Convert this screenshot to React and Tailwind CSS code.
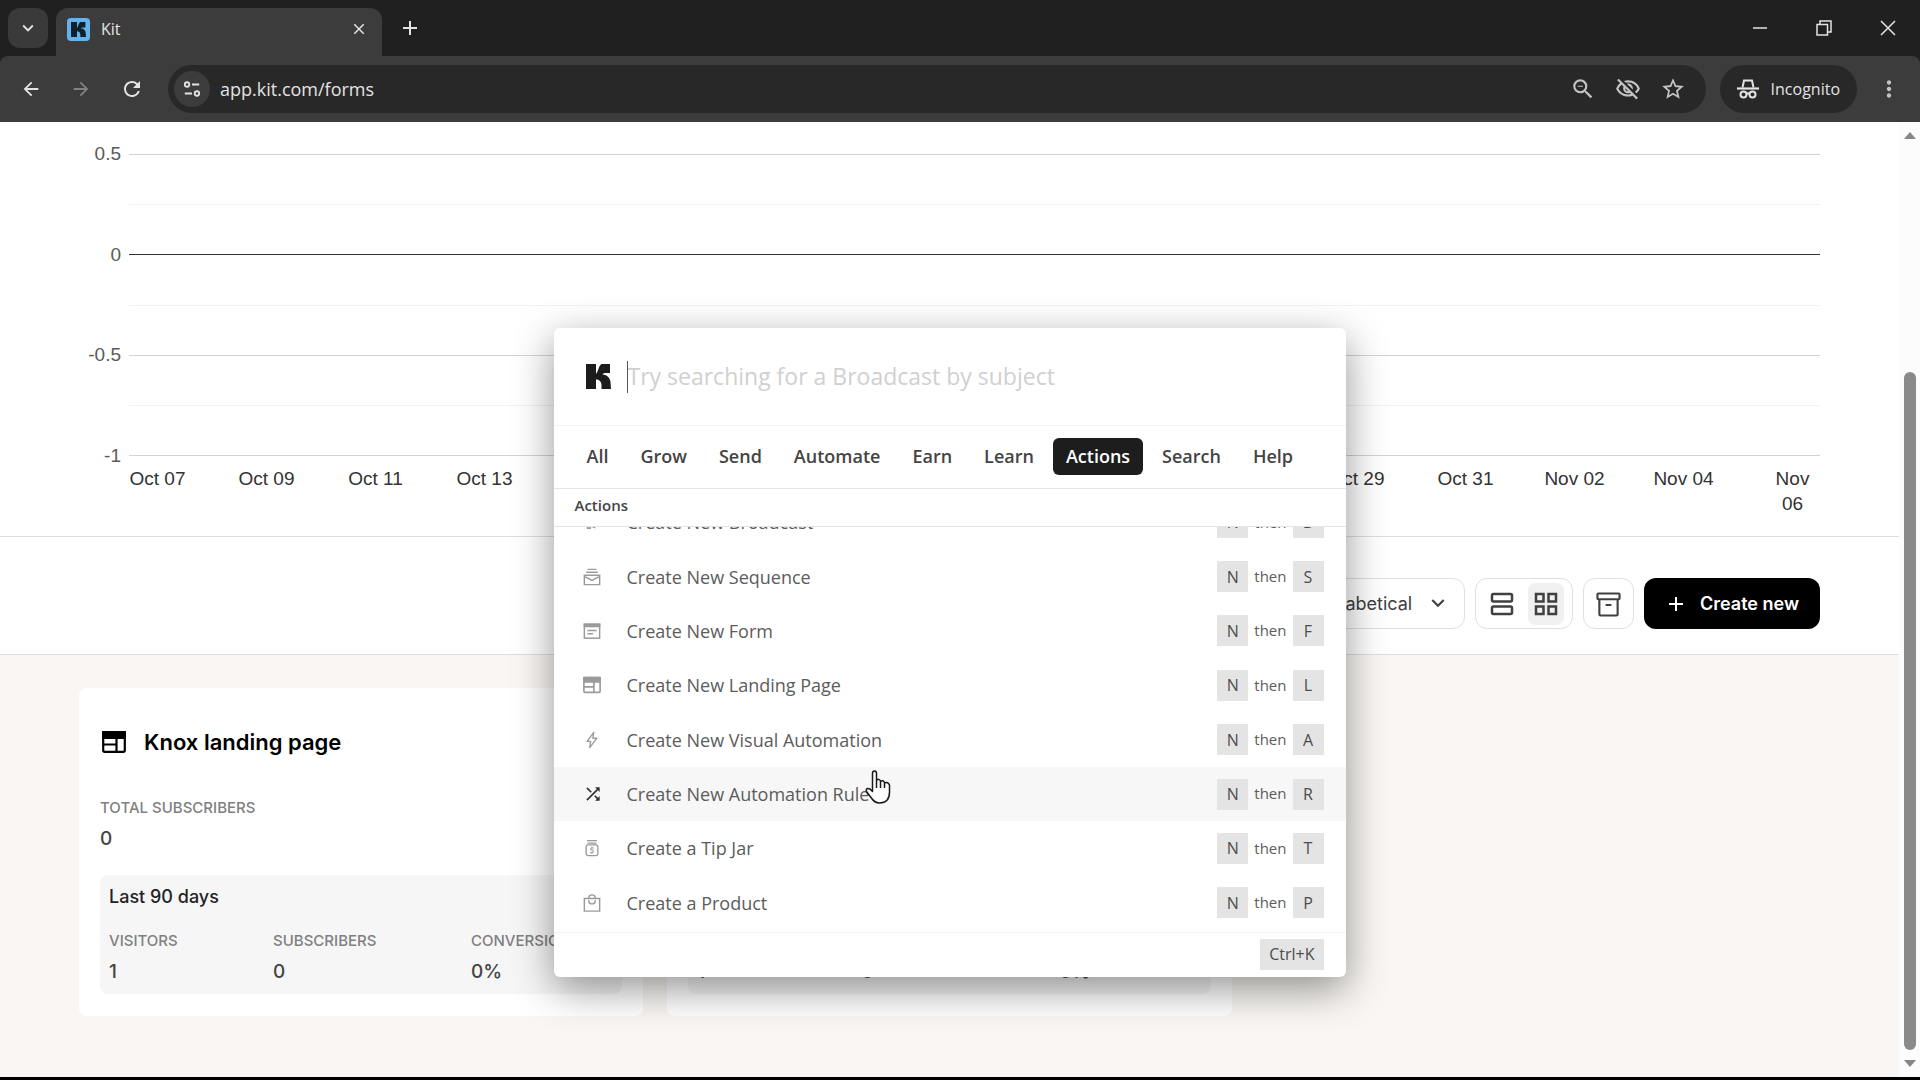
import React from "react";
import {
  MdArrowBack,
  MdArrowForward,
  MdRefresh,
  MdZoomOut,
  MdOutlineVisibilityOff,
  MdStarOutline,
  MdMoreVert,
  MdShuffle,
  MdOutlineViewAgenda,
  MdOutlineGridView,
  MdKeyboardArrowDown,
  MdClose,
  MdAdd,
} from "react-icons/md";

const K_PATH =
  "M0 0H10V10C12 8 13 1 15.500 0H24V9H19.500C18 9 17 9.500 16.500 10.500C21.500 11 24 14 24.500 18L25 25H15.500V21C15.500 17.500 13 15.500 10 15.500V25H0Z";

function KitMark({ className }) {
  return (
    <svg viewBox="0 0 25 25" className={className} fill="currentColor" aria-hidden="true">
      <path d={K_PATH} />
    </svg>
  );
}

function SiteSettingsIcon() {
  return (
    <svg viewBox="0 0 20 20" className="size-[18px]" fill="none" stroke="currentColor" strokeWidth="2" aria-hidden="true">
      <circle cx="4.500" cy="5" r="2.500" />
      <path d="M10 5H18M2 15H10" />
      <circle cx="15.500" cy="15" r="2.500" />
    </svg>
  );
}

function IncognitoIcon() {
  return (
    <svg viewBox="0 0 22 22" className="size-[22px]" fill="none" stroke="currentColor" strokeWidth="2" aria-hidden="true">
      <path d="M0 10.500H22" strokeWidth="2.200" />
      <path d="M5.500 9.500L7 2.500H15L16.500 9.500" />
      <circle cx="6.500" cy="16.500" r="3" />
      <circle cx="15.500" cy="16.500" r="3" />
      <path d="M9.500 16Q11 14.500 12.500 16" />
    </svg>
  );
}

function LandingIcon({ className }) {
  return (
    <svg viewBox="0 0 24 22" className={className} fill="none" stroke="currentColor" strokeWidth="2.200" aria-hidden="true">
      <rect x="1.200" y="1.200" width="21.600" height="19.600" rx="1.500" />
      <path d="M1.200 1.200H22.800V7H1.200Z" fill="currentColor" />
      <path d="M1 13.500H14.500M14.500 7V21" />
    </svg>
  );
}

function BroadcastIcon({ className }) {
  return (
    <svg viewBox="0 0 20 20" className={className} fill="none" stroke="currentColor" strokeWidth="1.700" aria-hidden="true">
      <path d="M2 8V12L13 16V4ZM5 13V17H8V14M15 7Q18 10 15 13" />
    </svg>
  );
}

function SequenceIcon({ className }) {
  return (
    <svg viewBox="0 0 20 20" className={className} fill="none" stroke="currentColor" strokeWidth="1.600" aria-hidden="true">
      <path d="M5 1.500H15M3.500 4.700H16.500" />
      <path d="M1.500 8H18.500V18.500H1.500ZM1.500 9.500L7 12Q10 15 13 12L18.500 9.500" />
    </svg>
  );
}

function FormIcon({ className }) {
  return (
    <svg viewBox="0 0 20 20" className={className} fill="none" stroke="currentColor" strokeWidth="1.600" aria-hidden="true">
      <rect x="1.500" y="2.500" width="17" height="15.500" />
      <path d="M1.500 2.500H18.500V5H1.500Z" fill="currentColor" />
      <path d="M5 9.500H15M5 13H11" />
    </svg>
  );
}

function BoltIcon({ className }) {
  return (
    <svg viewBox="0 0 20 20" className={className} fill="none" stroke="currentColor" strokeWidth="1.500" strokeLinejoin="round" aria-hidden="true">
      <path d="M12 1.500L4.500 11.500H8.500L7.500 18.500L15.500 8H11Z" />
    </svg>
  );
}

function TipJarIcon({ className }) {
  return (
    <svg viewBox="0 0 20 20" className={className} fill="none" stroke="currentColor" strokeWidth="1.500" aria-hidden="true">
      <path d="M4.500 1.800H15.500M5 4.500H15" />
      <rect x="3.500" y="6.500" width="13" height="12" rx="2" />
      <path d="M12 10H9.200Q8 11 9.200 12.300H10.800Q12 13.500 10.800 15H8M10 8.700V10M10 15V16.500" strokeWidth="1.200" />
    </svg>
  );
}

function BagIcon({ className }) {
  return (
    <svg viewBox="0 0 20 20" className={className} fill="none" stroke="currentColor" strokeWidth="1.600" aria-hidden="true">
      <path d="M1.500 5H18.500V19H1.500Z" />
      <path d="M6.500 5V4Q6.500 1 10 1Q13.500 1 13.500 4V5M6.500 7V8Q6.500 11 10 11Q13.500 11 13.500 8V7" />
    </svg>
  );
}

function ArchiveIcon() {
  return (
    <svg viewBox="0 0 26 26" className="size-[25px]" fill="none" stroke="currentColor" strokeWidth="2.200" strokeLinejoin="round" aria-hidden="true">
      <rect x="1.500" y="1.500" width="23" height="6" rx="1" />
      <path d="M3.500 7.500V23Q3.500 24.500 5 24.500H21Q22.500 24.500 22.500 23V7.500M10 13.500H16" />
    </svg>
  );
}

function HandCursor() {
  return (
    <svg viewBox="0 0 26 34" className="h-[34px] w-[26px]" fill="#fff" stroke="#1a1a1a" strokeWidth="1.500" strokeLinejoin="round" aria-hidden="true">
      <path d="M7.500 19V3.500Q7.500 1 9.500 1Q11.500 1 11.500 3.500V13V10.500Q13.500 8 15.500 11V14V11.500Q18 9.500 19.500 12.500V15V13Q23 11.500 24.500 15V22Q24.500 33 14.500 33Q9.500 33 6 27.500L1.500 21.500Q.500 19.500 2.500 18.500Q5 18 7.500 21.500Z" />
      <path d="M11.500 13V18M15.500 14V18M19.500 15V18" fill="none" />
    </svg>
  );
}

function BrowserChrome() {
  return (
    <header className="shrink-0 bg-[#202020] font-['Open_Sans',sans-serif] text-[#e3e3e3]">
      <div className="flex h-14 items-end justify-between">
        <div className="flex h-full items-center">
          <button aria-label="Search tabs" className="ml-2 grid size-10 place-items-center rounded-xl bg-[#3a3a3a]">
            <MdKeyboardArrowDown className="size-[22px]" />
          </button>
          <div className="ml-2 flex h-12 w-[326px] items-center self-end rounded-t-xl bg-[#3c3c3c] pr-3.5 pb-2 pl-[11px] pt-0.5">
            <span className="grid size-[23px] place-items-center rounded bg-[#63b3ee] text-[#10202c]">
              <KitMark className="size-[15px]" />
            </span>
            <span className="ml-[11px] flex-1 text-base">Kit</span>
            <button aria-label="Close tab">
              <MdClose className="size-[18px]" />
            </button>
          </div>
          <button aria-label="New tab" className="ml-4">
            <MdAdd className="size-6" />
          </button>
        </div>
        <div className="flex h-full items-center gap-12 pr-6">
          <button aria-label="Minimize">
            <svg viewBox="0 0 16 16" className="size-4" stroke="currentColor" strokeWidth="1.500"><path d="M1 8H15" /></svg>
          </button>
          <button aria-label="Restore">
            <svg viewBox="0 0 16 16" className="size-4" fill="none" stroke="currentColor" strokeWidth="1.500"><path d="M1 4.500H11.500V15H1ZM4 4.500V1H15V12H11.500" /></svg>
          </button>
          <button aria-label="Close window">
            <svg viewBox="0 0 16 16" className="size-4" stroke="currentColor" strokeWidth="1.500"><path d="M1 1L15 15M15 1L1 15" /></svg>
          </button>
        </div>
      </div>
      <div className="flex h-[66px] items-center rounded-t-lg bg-[#3c3c3c]">
        <button aria-label="Back" className="ml-5"><MdArrowBack className="size-[22px]" /></button>
        <button aria-label="Forward" disabled className="ml-7 text-[#818181]"><MdArrowForward className="size-[22px]" /></button>
        <button aria-label="Reload" className="ml-7"><MdRefresh className="size-6" /></button>
        <div className="ml-6 flex h-12 flex-1 items-center rounded-full bg-[#282828] pr-5">
          <button aria-label="Site information" className="ml-1.5 grid size-9 place-items-center rounded-full bg-[#3c3c3c]">
            <SiteSettingsIcon />
          </button>
          <label htmlFor="address" className="sr-only">Address</label>
          <input id="address" type="text" defaultValue="app.kit.com/forms" className="ml-2.5 h-8 min-w-0 flex-1 bg-transparent text-lg outline-none" />
          <div className="flex items-center gap-[19px] text-[#c4c4c4]">
            <button aria-label="Zoom"><MdZoomOut className="size-[26px]" /></button>
            <button aria-label="Third-party cookies blocked"><MdOutlineVisibilityOff className="size-[26px]" /></button>
            <button aria-label="Bookmark"><MdStarOutline className="size-[26px]" /></button>
          </div>
        </div>
        <button className="ml-3.5 flex h-12 items-center gap-3 rounded-full bg-[#282828] px-[17px] text-base">
          <IncognitoIcon />
          Incognito
        </button>
        <button aria-label="Menu" className="ml-[19px] mr-[18px] text-[#c4c4c4]"><MdMoreVert className="size-[26px]" /></button>
      </div>
    </header>
  );
}

const DATES = [
  "Oct 07", "Oct 09", "Oct 11", "Oct 13", "Oct 15", "Oct 17", "Oct 19", "Oct 21",
  "Oct 23", "Oct 25", "Oct 27", "Oct 29", "Oct 31", "Nov 02", "Nov 04", "Nov 06",
];

const GRID_LINES = [
  "border-[#f1f1f1]",
  "border-[#333]",
  "border-[#f1f1f1]",
  "border-[#d2d2d2]",
  "border-[#f1f1f1]",
  "border-[#d2d2d2]",
];

function Chart() {
  return (
    <section className="border-b border-[#dedede] pt-[22px] pb-5 font-['Liberation_Sans',sans-serif] text-[19px]">
      <div className="flex px-[79px]">
        <div className="flex w-[50px] flex-col justify-between pr-2 text-right leading-5 text-[#5a5a5a]">
          <span>0.5</span>
          <span>0</span>
          <span>-0.5</span>
          <span>-1</span>
        </div>
        <div className="my-2.5 flex h-[302px] flex-1 flex-col border-t border-[#d2d2d2]">
          {GRID_LINES.map((tone, i) => (
            <div key={i} className={`flex-1 border-b ${tone}`} />
          ))}
        </div>
      </div>
      <div className="grid grid-cols-16 pr-[52px] pl-[103px] text-center leading-[25px] text-[#333]">
        {DATES.map((d) => (
          <span key={d} className={d === "Nov 06" ? "px-8" : "whitespace-nowrap"}>{d}</span>
        ))}
      </div>
    </section>
  );
}

function Toolbar() {
  return (
    <section className="flex items-center justify-end gap-2.5 border-b border-[#e0dedc] px-[79px] pt-[41px] pb-[25px] text-lg text-[#404040]">
      <div className="relative">
        <label htmlFor="sort" className="sr-only">Sort by</label>
        <select id="sort" className="h-[51px] appearance-none rounded-xl border border-[#e0e0e0] bg-white pr-[51px] pl-4">
          <option>Alphabetical</option>
        </select>
        <MdKeyboardArrowDown className="pointer-events-none absolute top-3 right-3.5 size-[26px]" />
      </div>
      <div className="flex h-[51px] items-center gap-2 rounded-xl border border-[#e0e0e0] px-2">
        <button aria-label="List view" className="grid h-[42px] w-9 place-items-center rounded-lg"><MdOutlineViewAgenda className="size-[30px]" /></button>
        <button aria-label="Grid view" className="grid h-[42px] w-9 place-items-center rounded-lg bg-[#f0f0f0]"><MdOutlineGridView className="size-[30px]" /></button>
      </div>
      <button aria-label="Archive" className="grid size-[51px] place-items-center rounded-xl border border-[#e0e0e0] pt-0.5"><ArchiveIcon /></button>
      <button className="flex h-[51px] items-center gap-3 rounded-xl bg-black pr-[21px] pl-5 font-semibold text-white">
        <MdAdd className="size-6" />
        Create new
      </button>
    </section>
  );
}

function Stat({ label, value }) {
  return (
    <div>
      <dt className="text-[15px] leading-6 font-medium text-[#808080]">{label}</dt>
      <dd className="mt-[7px] text-[19px] leading-6 font-medium text-[#444]">{value}</dd>
    </div>
  );
}

function PageCard({ name }) {
  return (
    <article className="rounded-lg bg-white px-[21px] pt-10 pb-[22px]">
      <h2 className="flex items-center gap-[18px] pl-0.5 text-[22px] leading-7 font-semibold text-black">
        <LandingIcon className="h-[22px] w-6" />
        {name}
      </h2>
      <dl className="mt-10">
        <Stat label="TOTAL SUBSCRIBERS" value="0" />
      </dl>
      <div className="mt-6 rounded-lg bg-[#f6f6f7] px-[9px] pt-2.5 pb-2.5">
        <h3 className="text-lg leading-6 font-medium text-[#222]">Last 90 days</h3>
        <dl className="mt-5 grid grid-cols-[164px_198px_1fr]">
          <Stat label="VISITORS" value="1" />
          <Stat label="SUBSCRIBERS" value="0" />
          <Stat label="CONVERSION" value="0%" />
        </dl>
      </div>
    </article>
  );
}

const TABS = ["All", "Grow", "Send", "Automate", "Earn", "Learn", "Actions", "Search", "Help"];

const ACTIONS = [
  { label: "Create New Broadcast", key: "B", Icon: BroadcastIcon },
  { label: "Create New Sequence", key: "S", Icon: SequenceIcon },
  { label: "Create New Form", key: "F", Icon: FormIcon },
  { label: "Create New Landing Page", key: "L", Icon: LandingIcon },
  { label: "Create New Visual Automation", key: "A", Icon: BoltIcon },
  { label: "Create New Automation Rule", key: "R", Icon: MdShuffle, active: true },
  { label: "Create a Tip Jar", key: "T", Icon: TipJarIcon },
  { label: "Create a Product", key: "P", Icon: BagIcon },
];

function Key({ children }) {
  return (
    <kbd className="grid h-[31px] min-w-[31px] place-items-center bg-[#e4e4e5] px-[9px] font-['Open_Sans',sans-serif] text-base font-medium text-[#4c4c4c]">
      {children}
    </kbd>
  );
}

function CommandPalette() {
  return (
    <div role="dialog" aria-label="Command palette" className="flex w-[792px] flex-col rounded-md bg-white font-['Open_Sans',sans-serif] shadow-[0_12px_40px_rgba(0,0,0,0.42)]">
      <div className="flex h-[98px] items-center border-b border-[#f3f3f3] px-8">
        <KitMark className="size-[25px] text-[#1c1c1c]" />
        <div className="ml-4 h-8 w-px bg-[#555]" />
        <label htmlFor="palette" className="sr-only">Search commands</label>
        <input id="palette" type="text" placeholder="Try searching for a Broadcast by subject" className="min-w-0 flex-1 text-[23px] outline-none placeholder:text-[#d0d0d0]" />
      </div>
      <nav className="flex h-[63px] items-center gap-1.5 border-b border-[#e6e6e6] px-5 pb-0.5">
        {TABS.map((t) => (
          <button key={t} className={t === "Actions" ? "h-[37px] rounded-md bg-[#1d1d1d] px-[13px] text-lg font-semibold text-white" : "h-[37px] px-[13px] text-lg font-semibold text-[#444]"}>
            {t}
          </button>
        ))}
      </nav>
      <h2 className="border-b border-[#e3e3e3] px-[21px] pt-1 pb-[9px] text-[15px] leading-6 font-semibold text-[#444]">Actions</h2>
      <div className="flex h-[405px] flex-col justify-end overflow-hidden pb-0.5">
        <ul className="flex h-[435px] shrink-0 flex-col">
          {ACTIONS.map(({ label, key, Icon, active }) => (
            <li key={key} className={active ? "flex-1 bg-[#f7f7f8]" : "flex-1"}>
              <button className="flex h-full w-full items-center pr-[22px] pl-[29px] text-left text-lg text-[#5c5c5c]">
                <Icon className={active ? "size-5 text-[#333]" : "size-[18px] text-[#9a9a9a]"} />
                <span className={active ? "ml-6 flex-1" : "ml-[26px] flex-1"}>{label}</span>
                <span className="flex items-center gap-1.5 text-[15px]">
                  <Key>N</Key>
                  then
                  <Key>{key}</Key>
                </span>
              </button>
            </li>
          ))}
        </ul>
      </div>
      <footer className="flex h-[45px] items-center justify-end border-t border-[#f2f2f2] pr-[22px] pb-0.5">
        <Key>Ctrl+K</Key>
      </footer>
    </div>
  );
}

export default function App() {
  return (
    <div className="flex h-screen flex-col overflow-hidden bg-black pb-[3px] font-['Inter',sans-serif]">
      <BrowserChrome />
      <div className="flex min-h-0 flex-1 bg-white">
        <main className="relative min-w-0 flex-1 bg-[#f9f6f3]">
          <div className="bg-white">
            <Chart />
            <Toolbar />
          </div>
          <div className="grid grid-cols-3 gap-6 px-[79px] pt-[33px]">
            <PageCard name="Knox landing page" />
            <PageCard name="Knox landing page" />
          </div>
          <div className="absolute inset-x-0 top-[206px] flex justify-center">
            <CommandPalette />
          </div>
          <div className="pointer-events-none absolute top-[648px] left-[865px]">
            <HandCursor />
          </div>
        </main>
        <div className="flex w-[21px] shrink-0 flex-col items-center bg-[#fcfcfc] pt-2.5 pb-2.5" aria-hidden="true">
          <svg viewBox="0 0 12 7" className="h-[7px] w-3 fill-[#868686]"><path d="M0 7L6 0L12 7Z" /></svg>
          <div className="mt-[233px] mb-2.5 w-3 flex-1 rounded-full bg-[#8b8a8b]" />
          <svg viewBox="0 0 12 7" className="h-[7px] w-3 fill-[#868686]"><path d="M0 0L6 7L12 0Z" /></svg>
        </div>
      </div>
    </div>
  );
}
